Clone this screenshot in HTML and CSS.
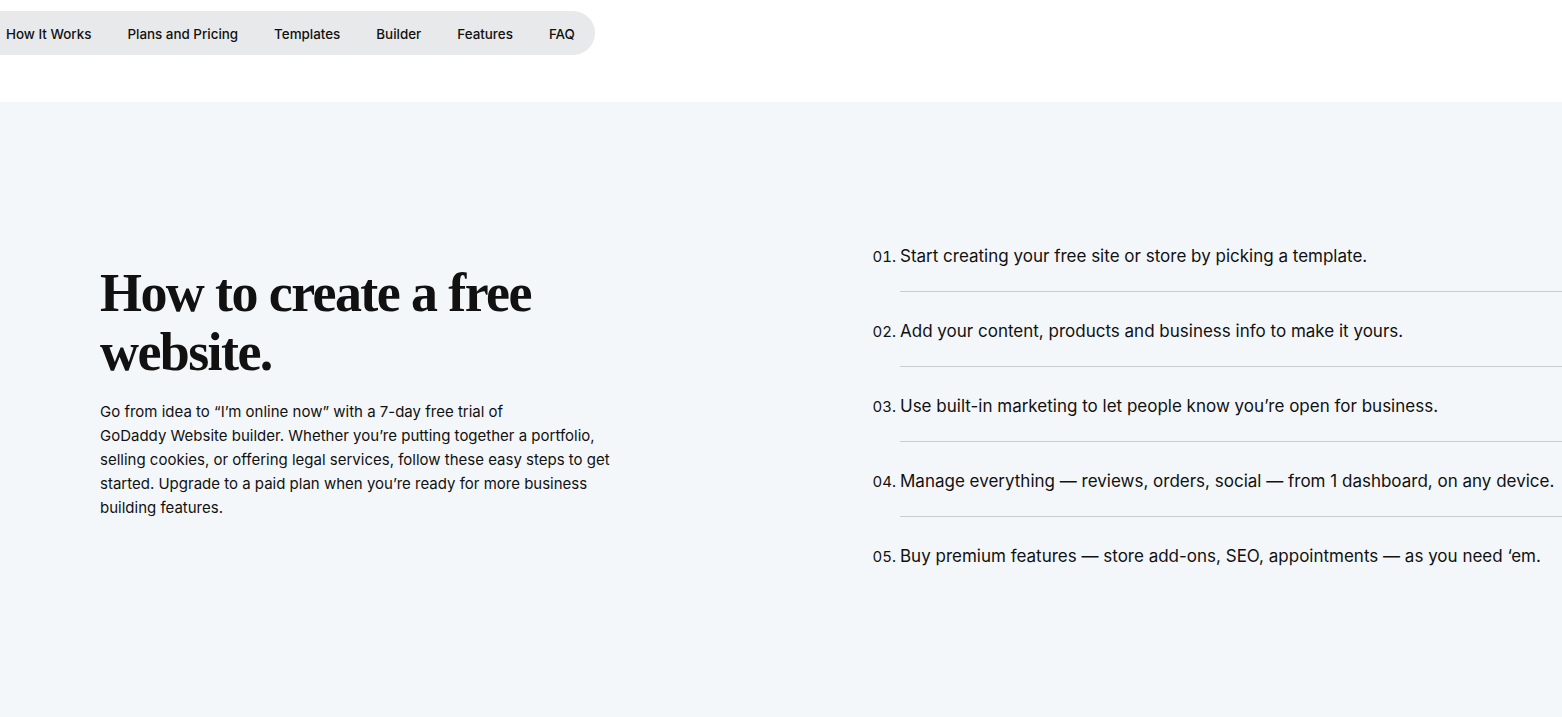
FILE: index.html
```html
<!DOCTYPE html>
<html lang="en">
<head>
    <meta charset="UTF-8">
    <meta name="viewport" content="width=device-width, initial-scale=1.0">
    <title>How to create a free website</title>
    <link rel="stylesheet" href="styles.css">
</head>
<body>
    <div class="topbar">
        <nav class="subnav">
            <a href="#">How It Works</a>
            <a href="#">Plans and Pricing</a>
            <a href="#">Templates</a>
            <a href="#">Builder</a>
            <a href="#">Features</a>
            <a href="#">FAQ</a>
        </nav>
    </div>
    <section class="how-it-works">
        <div class="intro">
            <h2>How to create a free website.</h2>
            <p>Go from idea to “I’m online now” with a 7-day free trial of<br>GoDaddy Website builder. Whether you’re putting together a portfolio, selling cookies, or offering legal services, follow these easy steps to get started. Upgrade to a paid plan when you’re ready for more business building features.</p>
        </div>
        <ol class="steps">
            <li>Start creating your free site or store by picking a template.</li>
            <li>Add your content, products and business info to make it yours.</li>
            <li>Use built-in marketing to let people know you’re open for business.</li>
            <li>Manage everything — reviews, orders, social — from 1 dashboard, on any device.</li>
            <li>Buy premium features — store add-ons, SEO, appointments — as you need ‘em.</li>
        </ol>
    </section>
</body>
</html>
```

FILE: styles.css
```css
body {
    margin: 0;
    padding: 0;
    font-family: Inter, "Noto Sans", Arial, sans-serif;
    color: #111;
    background-color: #fff;
    overflow: hidden;
}
.topbar {
    height: 102px;
    padding-top: 11px;
    box-sizing: border-box;
}
.subnav {
    display: inline-flex;
    align-items: center;
    gap: 36px;
    height: 44px;
    margin-left: -14px;
    padding: 1px 20px 0;
    box-sizing: border-box;
    background-color: #e8e9ea;
    border-radius: 0 22px 22px 0;
}
.subnav a {
    color: #111;
    text-decoration: none;
    font-size: 13.4px;
    font-weight: 500;
}
.how-it-works {
    background-color: #f4f7fa;
    height: 615px;
    display: flex;
    padding-left: 100px;
    box-sizing: border-box;
}
.intro {
    width: 520px;
    padding-top: 162px;
}
.intro h2 {
    font-family: "Liberation Serif", "Times New Roman", serif;
    font-weight: bold;
    font-size: 54px;
    line-height: 59px;
    letter-spacing: -1.6px;
    margin: 0 0 18px;
}
.intro p {
    font-size: 15px;
    line-height: 24px;
    margin: 0;
}
.steps {
    flex: 1;
    margin: 0 0 0 280px;
    padding: 115px 0 0;
    list-style: decimal-leading-zero;
    font-size: 17px;
}
.steps li {
    padding: 22px 0 18px;
    line-height: 34px;
    border-bottom: 1px solid #c9cdd1;
}
.steps li:last-child {
    border-bottom: none;
}
.steps li::marker {
    font-size: 15px;
}
```
